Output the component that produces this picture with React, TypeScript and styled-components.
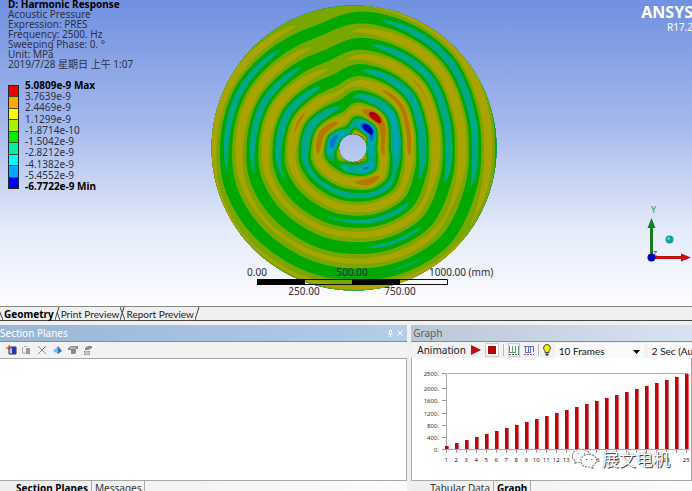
import React from 'react';
import styled, { createGlobalStyle } from 'styled-components';

const Global = createGlobalStyle`
  *, *::before, *::after { box-sizing: border-box; }
  html, body { margin: 0; padding: 0; overflow: hidden; }
  body { background: #f0f0f0; color: #222; font: 10px/12px "Noto Sans", "Noto Sans CJK SC", sans-serif; }
  button, select { font: inherit; color: inherit; margin: 0; padding: 0; border: 0; background: none; border-radius: 0; }
`;

/* ---------- pressure field ---------- */

const R = 143;
const WAVE = 26.3;
type Knot = [number, number];

const phaseKnots: Knot[] = [
  [0, 15.5], [22, 18], [42, 24], [60, 25], [88, 26], [97, 22], [105, 17], [120, 17.5], [135, 19],
  [152, 22], [180, 22.5], [195, 24.5], [215, 23], [235, 21], [255, 21], [270, 21], [290, 23], [315, 25], [335, 19], [360, 15.5],
];
const strengthKnots: Knot[] = [
  [0, 1.95], [30, 2.05], [50, 2.1], [65, 1.85], [78, 1.4], [90, 1.05], [100, 0.85], [113, 1], [130, 1.5], [150, 1.9],
  [175, 1.75], [195, 1.3], [215, 1.1], [235, 1.15], [270, 1.25], [290, 1.45], [308, 1.4], [322, 1.05], [335, 1.15], [350, 1.7], [360, 1.95],
];

function linear(knots: Knot[], angle: number) {
  const a = (angle + 360) % 360;
  let i = 0;
  while (i < knots.length - 2 && knots[i + 1][0] < a) i++;
  const [a0, v0] = knots[i];
  const [a1, v1] = knots[i + 1];
  return v0 + ((v1 - v0) * (a - a0)) / (a1 - a0);
}

/* One value per half degree, averaged over a window so that rings bend softly. */
function smoothTable(knots: Knot[], reach: number) {
  return Array.from({ length: 721 }, (_, i) => {
    let sum = 0, total = 0;
    for (let d = -reach; d <= reach; d++) {
      const w = 1 + Math.cos((Math.PI * d) / (reach + 1));
      sum += w * linear(knots, i / 2 + d);
      total += w;
    }
    return sum / total;
  });
}
const phase = smoothTable(phaseKnots, 9);
const strength = smoothTable(strengthKnots, 9);

function read(table: number[], a: number) {
  const p = Math.min(a * 2, 719.999);
  const i = Math.floor(p);
  return table[i] + (table[i + 1] - table[i]) * (p - i);
}

const spots = [
  { x: 20, y: 31, v: 2.1, s: 5 },
  { x: 12, y: 19, v: -3.4, s: 5 },
  { x: -20, y: 5, v: -1.2, s: 6 },
  { x: 12, y: -20, v: -1.5, s: 6 },
  { x: 15, y: -35, v: 0.9, s: 8 },
  { x: 29, y: 4, v: -1.1, s: 9 },
  { x: -15, y: -12, v: 1.6, s: 5 },
  { x: 14, y: 2, v: 2, s: 4 },
];

function pressure(x: number, y: number) {
  const r = Math.hypot(x, y);
  const a = (Math.atan2(y, x) * 180 / Math.PI + 360) % 360;
  const amp = read(strength, a) * (0.8 + 35 / Math.max(r, 26));
  let f = -amp * Math.cos((2 * Math.PI * (r - read(phase, a))) / WAVE);
  for (const s of spots) f += s.v * Math.exp(-((x - s.x) ** 2 + (y - s.y) ** 2) / (2 * s.s * s.s));
  return f;
}

const STEP = 1.5;
const N = Math.ceil((2 * R) / STEP) + 3;
const grid: number[][] = Array.from({ length: N }, (_, j) =>
  Array.from({ length: N }, (_, i) =>
    i === 0 || j === 0 || i === N - 1 || j === N - 1 ? -99 : pressure((i - 1) * STEP - R, R - (j - 1) * STEP)));

/* Marching squares: closed outlines of the area at or above a level. */
function contour(level: number) {
  const next = new Map<string, string[]>();
  const at = new Map<string, string>();
  const point = (i: number, j: number, horizontal: boolean) => {
    const key = `${horizontal ? 'h' : 'v'}${i},${j}`;
    if (!at.has(key)) {
      const p = grid[j][i];
      const q = horizontal ? grid[j][i + 1] : grid[j + 1][i];
      const t = (level - p) / (q - p);
      const x = (i - 1 + (horizontal ? t : 0)) * STEP;
      const y = (j - 1 + (horizontal ? 0 : t)) * STEP;
      at.set(key, `${x.toFixed(1)} ${y.toFixed(1)}`);
    }
    return key;
  };
  const link = (a: string, b: string) => {
    next.set(a, [...(next.get(a) || []), b]);
    next.set(b, [...(next.get(b) || []), a]);
  };
  for (let j = 0; j < N - 1; j++) {
    for (let i = 0; i < N - 1; i++) {
      const a = grid[j][i] >= level, b = grid[j][i + 1] >= level;
      const c = grid[j + 1][i + 1] >= level, d = grid[j + 1][i] >= level;
      const cuts: string[] = [];
      if (a !== b) cuts.push(point(i, j, true));
      if (b !== c) cuts.push(point(i + 1, j, false));
      if (c !== d) cuts.push(point(i, j + 1, true));
      if (d !== a) cuts.push(point(i, j, false));
      for (let k = 0; k + 1 < cuts.length; k += 2) link(cuts[k], cuts[k + 1]);
    }
  }
  const seen = new Set<string>();
  let d = '';
  for (const start of next.keys()) {
    if (seen.has(start)) continue;
    let cur: string | undefined = start;
    const pts: string[] = [];
    while (cur) {
      seen.add(cur);
      pts.push(at.get(cur)!);
      cur = next.get(cur)!.find((n) => !seen.has(n));
    }
    d += `M${pts.join('L')}Z`;
  }
  return d;
}

const bands = [
  { level: -5.45, fill: '#0078c8' },
  { level: -4.14, fill: '#00a6b0' },
  { level: -2.82, fill: '#00a888' },
  { level: -1.5, fill: '#00a800' },
  { level: -0.19, fill: '#78a800' },
  { level: 1.13, fill: '#aaa400' },
  { level: 2.45, fill: '#b47a00' },
  { level: 3.9, fill: '#b00000' },
].map((b) => ({ ...b, d: contour(b.level) }));

/* ---------- layout ---------- */

const Page = styled.div`
  display: flex;
  flex-direction: column;
  height: 100vh;
`;
const Viewport = styled.main`
  flex: 0 0 307px;
  display: grid;
  grid-template-columns: 211fr 286px 195fr;
  background: linear-gradient(#7090e0 0, #a4b8ec 40%, #e4eaf9 75%, #fdfdff 100%);
  border-bottom: 1px solid #888;
  overflow: hidden;
`;
const Info = styled.section`
  padding-left: 8px;
  white-space: nowrap;
  color: #2c3044;
`;
const Heading = styled.h1`
  margin: -1px 0 0;
  font-size: 10px;
  line-height: 10px;
  color: #000;
`;
const Line = styled.p`
  margin: 0;
  line-height: 10px;
`;
const Legend = styled.div`
  display: flex;
  gap: 6px;
  margin-top: 11px;
  height: 112px;
`;
const Swatches = styled.div`
  display: flex;
  flex-direction: column;
  width: 11px;
  margin: 5px 0 3px;
  border: 1px solid #1c2a30;
`;
const Swatch = styled.i<{ $c: string }>`
  flex: 1;
  background: ${(p) => p.$c};
  & + & { border-top: 1px solid #3a4a20; }
`;
const Values = styled.ul`
  display: flex;
  flex-direction: column;
  justify-content: space-between;
  list-style: none;
  margin: 0;
  padding: 0;
  line-height: 11px;
`;
const Value = styled.li<{ $strong?: boolean }>`
  font-weight: ${(p) => (p.$strong ? 700 : 400)};
  color: ${(p) => (p.$strong ? '#000' : 'inherit')};
`;
const Stage = styled.section`
  position: relative;
  padding-top: 5px;
`;
const Disc = styled.svg`
  display: block;
  width: 286px;
  height: 286px;
`;
const Ruler = styled.svg`
  position: absolute;
  left: 34px;
  bottom: 7px;
  width: 252px;
  height: 32px;
  overflow: visible;
  font-size: 10px;
  fill: #2a2c38;
`;
const Side = styled.section`
  display: flex;
  flex-direction: column;
  align-items: flex-end;
  justify-content: space-between;
  color: #fff;
`;
const Brand = styled.div`
  margin: 4px -1px 0 0;
  text-align: right;
`;
const BrandName = styled.strong`
  display: block;
  font: 700 16px/17px "Noto Sans", sans-serif;
`;
const Triad = styled.svg`
  width: 48px;
  height: 62px;
  margin-bottom: 40px;
`;
const ViewTabs = styled.nav`
  display: flex;
  flex: 0 0 13px;
  background: #f0f0f0;
  border-bottom: 1px solid #444;
`;
const ViewTab = styled.button<{ $active?: boolean }>`
  padding: 0 1px;
  font: ${(p) => (p.$active ? '700 10px/12px "Noto Sans"' : '400 10px/12px Lato')}, sans-serif;
  color: ${(p) => (p.$active ? '#000' : '#222')};
  white-space: nowrap;
`;
const Slant = styled.svg`
  flex: none;
  height: 13px;
  fill: none;
  stroke: #444;
`;
const Panels = styled.div`
  flex: 1;
  min-height: 0;
  display: grid;
  grid-template-columns: 592fr 408fr;
  grid-template-rows: minmax(0, 1fr);
  gap: 4px;
  padding-top: 4px;
`;
const Panel = styled.section`
  display: flex;
  flex-direction: column;
  min-width: 0;
  min-height: 0;
  overflow: hidden;
`;
const Title = styled.header<{ $active?: boolean }>`
  flex: 0 0 17px;
  display: flex;
  align-items: center;
  gap: 4px;
  padding: 0 4px 0 ${(p) => (p.$active ? 0 : 2)}px;
  color: ${(p) => (p.$active ? '#fff' : '#55606e')};
  background: ${(p) => (p.$active ? 'linear-gradient(90deg, #9bb5d6, #b4cde9)' : 'linear-gradient(90deg, #bac7d4, #d6e3f1)')};
  border-bottom: 1px solid #7c8ea4;
`;
const TitleText = styled.h2`
  flex: 1;
  margin: 0;
  font-size: 10px;
  font-weight: 400;
`;
const IconButton = styled.button<{ $pressed?: boolean }>`
  flex: none;
  display: flex;
  align-items: center;
  justify-content: center;
  height: 14px;
  outline: ${(p) => (p.$pressed ? '1px solid #ccc' : 'none')};
  outline-offset: -1px;
  background: ${(p) => (p.$pressed ? '#fafafa' : 'none')};
`;
const Tools = styled.div<{ $gap: number }>`
  flex: 0 0 16px;
  display: flex;
  align-items: center;
  gap: ${(p) => p.$gap}px;
  padding-left: 6px;
  background: #f2f2f2;
  white-space: nowrap;
  overflow: hidden;
`;
const Divider = styled.i`
  flex: none;
  width: 1px;
  height: 12px;
  background: #bbb;
`;
const Pick = styled.select<{ $w: number }>`
  flex: none;
  width: ${(p) => p.$w}px;
  height: 15px;
  padding: 2px 0 0 4px;
  appearance: none;
  font-family: Lato, sans-serif;
  color: #111;
  background: #fafafa;
`;
const PickWrap = styled.label`
  flex: none;
  display: grid;
  align-items: center;
  & > * { grid-area: 1 / 1; }
  & > svg { justify-self: end; margin: 3px 4px 0 0; pointer-events: none; }
`;
const Canvas = styled.div<{ $framed?: boolean }>`
  position: relative;
  flex: 1;
  min-height: 0;
  background: #fff;
  border: 1px solid #a8a8a8;
  border-left-width: ${(p) => (p.$framed ? 1 : 0)}px;
  border-top-width: ${(p) => (p.$framed ? 0 : 1)}px;
`;
const Chart = styled.svg`
  display: block;
  margin-top: 10px;
  width: 282px;
  height: 90px;
  font-size: 6px;
  fill: #333;
`;
const Sets = styled.ol`
  display: flex;
  width: 250px;
  margin: -2px 0 0 29px;
  padding: 0;
  list-style: none;
  font-size: 6px;
  line-height: 8px;
`;
const SetNo = styled.li`
  flex: 1;
  text-align: center;
`;
const Watermark = styled.div`
  position: absolute;
  right: 21px;
  bottom: 10px;
  display: flex;
  align-items: center;
  gap: 4px;
  color: #fff;
  font: 17px/20px "Noto Sans CJK SC", sans-serif;
  text-shadow: 1px 1px 0 #444, 0 0 1px #777;
`;
const FootTabs = styled.nav<{ $indent: number }>`
  flex: 0 0 10px;
  min-height: 0;
  display: flex;
  align-items: flex-start;
  overflow: hidden;
  padding-left: ${(p) => p.$indent}px;
  background: linear-gradient(90deg, #eee, #fbfbfb);
`;
const FootTab = styled.button<{ $active?: boolean }>`
  height: 14px;
  padding: 1px 3px 0;
  line-height: 13px;
  white-space: nowrap;
  font-weight: ${(p) => (p.$active ? 700 : 400)};
  color: ${(p) => (p.$active ? '#000' : '#333')};
  border-right: 1px solid #aaa;
`;

const colours = ['#f00000', '#ffa800', '#ffff00', '#a8f000', '#00f000', '#00f0a8', '#00ffff', '#00a8ff', '#0000f0'];
const values = ['5.0809e-9 Max', '3.7639e-9', '2.4469e-9', '1.1299e-9', '-1.8714e-10', '-1.5042e-9', '-2.8212e-9', '-4.1382e-9', '-5.4552e-9', '-6.7722e-9 Min'];
const lines = ['Acoustic Pressure', 'Expression: PRES', 'Frequency: 2500. Hz', 'Sweeping Phase: 0. °', 'Unit: MPa', '2019/7/28 星期日 上午 1:07'];
const labelled = (n: number) => n <= 13 || [16, 18, 23, 25].includes(n);

function Plot() {
  return (
    <Disc viewBox="0 0 286 286" role="img" aria-label="Acoustic pressure contours">
      <defs>
        <clipPath id="rim"><path clipRule="evenodd" d="M143 .5a142.5 142.5 0 1 0 .1 0ZM142 129a14 14 0 1 1-.1 0Z" /></clipPath>
      </defs>
      <g clipPath="url(#rim)">
        <rect width="286" height="286" fill="#0000a8" />
        {bands.map((b) => <path key={b.level} d={b.d} fill={b.fill} fillRule="evenodd" />)}
        <path d="M133 133q9-8 20 1M140 158q9 1 14-5" fill="none" stroke="#a02010" strokeDasharray="2 1" />
      </g>
    </Disc>
  );
}

function Scale() {
  return (
    <Ruler viewBox="0 0 252 32">
      <path d="M12.500 12.500h190v5h-190z" fill="none" stroke="#111" />
      <path d="M12 12h48v6h-48zM107 12h48v6h-48z" fill="#000" />
      <g textAnchor="middle">
        <text x="12" y="9">0.00</text>
        <text x="107" y="9">500.00</text>
        <text x="59" y="28">250.00</text>
        <text x="155" y="28">750.00</text>
      </g>
      <text x="184" y="9">1000.00 (mm)</text>
    </Ruler>
  );
}

function Axes() {
  return (
    <Triad viewBox="0 0 48 62" aria-label="Axes">
      <text x="7" y="9" fontSize="9" fill="#159a35">Y</text>
      <path d="M7.500 22v31" stroke="#137a20" strokeWidth="3" />
      <path d="M7.500 14l4 10h-8z" fill="#108020" />
      <path d="M8 53.500h32" stroke="#c01414" strokeWidth="3" />
      <path d="M47 53.500l-10-4v8z" fill="#c80c0c" />
      <text x="9" y="52" fontSize="9" fill="#3038e8">z</text>
      <circle cx="7.500" cy="53.500" r="4" fill="#0000b4" />
      <circle cx="25.500" cy="35.500" r="4" fill="#10a0a0" />
      <circle cx="24.500" cy="34.500" r="1.500" fill="#50d8d8" />
    </Triad>
  );
}

function HarmonicChart() {
  const x = (n: number) => 34 + (n - 1) * 10;
  return (
    <Chart viewBox="0 0 282 90" role="img" aria-label="Frequency by set">
      <path d="M34.500 81V5.500H276M34 81.500h243" fill="none" stroke="#aaa" />
      {[2500, 2000, 1600, 1200, 800, 400, 0].map((v) => {
        const y = Math.round(81 - (v / 2500) * 76);
        return (
          <g key={v}>
            <path d={`M30 ${y + 0.5}h4`} stroke="#999" />
            <text x="27" y={y + 3} textAnchor="end">{v}.</text>
          </g>
        );
      })}
      {Array.from({ length: 25 }, (_, i) => (
        <g key={i}>
          <rect x={x(i + 1) - 1} y={81 - (i + 1) * 3} width="4" height={(i + 1) * 3} fill="#e86060" />
          <rect x={x(i + 1) - 1} y={81 - (i + 1) * 3} width="3" height={(i + 1) * 3} fill="#b40a10" />
          <path d={`M${x(i + 1) + 0.5} 82v3`} stroke="#999" />
        </g>
      ))}
    </Chart>
  );
}

export default function App() {
  return (
    <Page>
      <Global />
      <Viewport>
        <Info>
          <Heading>D: Harmonic Response</Heading>
          {lines.map((l) => <Line key={l}>{l}</Line>)}
          <Legend>
            <Swatches>{colours.map((c) => <Swatch key={c} $c={c} />)}</Swatches>
            <Values>
              {values.map((v, i) => <Value key={v} $strong={i === 0 || i === 9}>{v}</Value>)}
            </Values>
          </Legend>
        </Info>
        <Stage><Plot /><Scale /></Stage>
        <Side>
          <Brand><BrandName>ANSYS</BrandName>R17.2</Brand>
          <Axes />
        </Side>
      </Viewport>

      <ViewTabs>
        <Slant width="3" viewBox="0 0 3 13"><path d="M-1 3L3 13" /></Slant>
        <ViewTab $active>Geometry</ViewTab>
        <Slant width="5" viewBox="0 0 5 13"><path d="M0 13L4 0M2 5l3 8" /></Slant>
        <ViewTab>Print Preview</ViewTab>
        <Slant width="5" viewBox="0 0 5 13"><path d="M0 13L4 0M0 0l5 13" /></Slant>
        <ViewTab>Report Preview</ViewTab>
        <Slant width="5" viewBox="0 0 5 13"><path d="M0 13L4 0" /></Slant>
      </ViewTabs>

      <Panels>
        <Panel>
          <Title $active>
            <TitleText>Section Planes</TitleText>
            <IconButton aria-label="Pin">
              <svg width="5" height="7" viewBox="0 0 5 7" fill="none" stroke="#fff"><path d="M1.500 0v3.500M3.500 0v3.500M0 4h5M2.500 4v3M1 .5h3" /></svg>
            </IconButton>
            <IconButton aria-label="Close">
              <svg width="6" height="6" viewBox="0 0 6 6" stroke="#fff"><path d="M.5.5l5 5M5.500.5l-5 5" /></svg>
            </IconButton>
          </Title>
          <Tools $gap={5}>
            <IconButton aria-label="New section plane">
              <svg width="11" height="11" viewBox="0 0 11 11"><path d="M3 2h7v7H3z" fill="#b8c4f0" stroke="#334" /><path d="M6 2h4v7H6z" fill="#2038b8" /><path d="M0 3h6M3 0v5" stroke="#d82838" /></svg>
            </IconButton>
            <IconButton aria-label="Edit section plane">
              <svg width="10" height="10" viewBox="0 0 10 10"><path d="M.5 2v6H4M2 1.500h3" fill="none" stroke="#aaa" /><path d="M4 3h4v6H4z" fill="#999" /></svg>
            </IconButton>
            <IconButton aria-label="Delete section plane">
              <svg width="10" height="10" viewBox="0 0 10 10" stroke="#888"><path d="M1 1l8 8M9 1L1 9" /></svg>
            </IconButton>
            <IconButton aria-label="Show whole elements">
              <svg width="11" height="10" viewBox="0 0 11 10"><path d="M1 6l5-5v8z" fill="#70bdf0" /><path d="M6 1l4 5-4 3z" fill="#2878c0" /></svg>
            </IconButton>
            <IconButton aria-label="Show capping faces">
              <svg width="10" height="10" viewBox="0 0 10 10"><path d="M0 3l3-2h7v3H8v4L6 9H3V5H0z" fill="#888" /><path d="M2 3h6" stroke="#ddd" /></svg>
            </IconButton>
            <IconButton aria-label="Show mesh">
              <svg width="10" height="11" viewBox="0 0 10 11"><path d="M2 3l3-2h4v2L5 5H2zM1 6h6v4H1z" fill="#888" /><path d="M1 8h6M3 6v4M5 6v4" stroke="#ddd" /></svg>
            </IconButton>
          </Tools>
          <Canvas />
          <FootTabs $indent={13}>
            <FootTab $active>Section Planes</FootTab>
            <FootTab>Messages</FootTab>
          </FootTabs>
        </Panel>

        <Panel>
          <Title><TitleText>Graph</TitleText></Title>
          <Tools $gap={4}>
            <span>Animation</span>
            <IconButton aria-label="Play">
              <svg width="11" height="10" viewBox="0 0 11 10"><path d="M1 0l10 5-10 5z" fill="#c01010" /></svg>
            </IconButton>
            <IconButton aria-label="Stop" $pressed>
              <svg width="14" height="8" viewBox="0 0 14 8"><path d="M3 0h8v8H3z" fill="#b40808" /></svg>
            </IconButton>
            <Divider />
            <IconButton aria-label="Distributed" $pressed>
              <svg width="12" height="9" viewBox="0 0 12 9" fill="none"><path d="M1.500 0v6M4.500 0v6M7.500 0v6M10.500 0v8M1 6.500h7" stroke="#58a068" /><path d="M1 8.500h10" stroke="#555" strokeDasharray="2 1" /></svg>
            </IconButton>
            <IconButton aria-label="Result sets">
              <svg width="10" height="9" viewBox="0 0 10 9" fill="none"><path d="M1.500 0v6M4.500 0v6M6.500 0v6M9.500 0v6M0 .5h9M1 6.500h6" stroke="#5870c8" /><path d="M0 8.500h10" stroke="#b05060" strokeDasharray="2 1" /></svg>
            </IconButton>
            <Divider />
            <IconButton aria-label="Hint">
              <svg width="8" height="12" viewBox="0 0 8 12"><path d="M4 .5a3.500 3.500 0 0 0-2 6.300V8.500h4V6.800A3.500 3.500 0 0 0 4 .5z" fill="#fff000" stroke="#444" /><path d="M2.500 10.500h3" stroke="#333" strokeWidth="2" /></svg>
            </IconButton>
            <PickWrap aria-label="Frames">
              <Pick $w={89}><option>10 Frames</option></Pick>
              <svg width="7" height="4" viewBox="0 0 7 4"><path d="M0 0h7L3.500 4z" fill="#000" /></svg>
            </PickWrap>
            <PickWrap aria-label="Duration">
              <Pick $w={80}><option>2 Sec (Auto)</option></Pick>
            </PickWrap>
          </Tools>
          <Canvas $framed>
            <HarmonicChart />
            <Sets>{Array.from({ length: 25 }, (_, i) => <SetNo key={i}>{labelled(i + 1) ? i + 1 : ''}</SetNo>)}</Sets>
            <Watermark>
              <svg width="27" height="22" viewBox="0 0 25 21" fill="#fff" stroke="#777" strokeDasharray="2 1">
                <path d="M9 1C4 1 1 4 1 7.500c0 2 1 3.500 3 5L3 15l3-1.500c6 1.500 12-1.500 12-6C18 4 14 1 9 1z" />
                <path d="M16.500 6C12 6 9 9 9 12.500c0 4 4 6.500 9 5.500l3 2-1-3c2-1 4-2.500 4-5C24 8.500 21 6 16.500 6z" />
                <path d="M6 5.500h1M12 5.500h1M14 11h1M19 11h1" stroke="#555" strokeDasharray="none" />
              </svg>
              展文电机
            </Watermark>
          </Canvas>
          <FootTabs $indent={16}>
            <FootTab>Tabular Data</FootTab>
            <FootTab $active>Graph</FootTab>
          </FootTabs>
        </Panel>
      </Panels>
    </Page>
  );
}
